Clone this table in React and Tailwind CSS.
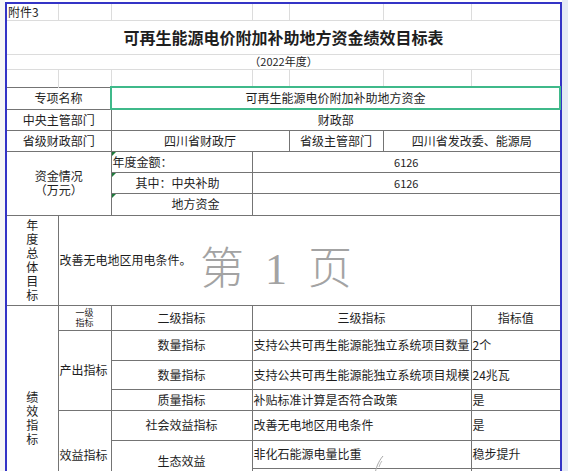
import React from "react"

const grid = "border-[#dcdcdc]"
const line = "border border-[#747474] p-0 whitespace-nowrap overflow-hidden"

const Tri = () => (
  <span className="absolute left-0 top-0 h-0 w-0 border-r-[4px] border-t-[4px] border-r-transparent border-t-[#1f7a3c]" />
)

const Vertical = ({ text }) => (
  <div className="flex flex-col items-center leading-[14px]">
    {text.split("").map((c, i) => (
      <span key={i}>{c}</span>
    ))}
  </div>
)

const App = () => {
  return (
    <div className="flex h-[471px] w-[568px] overflow-hidden bg-white font-['Noto_Sans_CJK_SC',sans-serif] text-[#1e1e1e]">
      <div className="w-[5px] shrink-0 bg-[#f6f6f6]" />

      <div className="relative mt-[2px] w-[557px] shrink-0 border-l-2 border-r-2 border-t-2 border-[#3434c6] bg-white">
        <table className="w-[553px] table-fixed border-collapse text-[12px] leading-[14px]">
          <colgroup>
            <col className="w-[51px]" />
            <col className="w-[53px]" />
            <col className="w-[141px]" />
            <col className="w-[37px]" />
            <col className="w-[94px]" />
            <col className="w-[88px]" />
            <col className="w-[89px]" />
          </colgroup>
          <tbody>
            <tr className="h-[16px]">
              <td className={`border-b border-r ${grid} p-0 pl-[1px] whitespace-nowrap`}>附件3</td>
              <td className={`border-b border-r ${grid} p-0`} />
              <td className={`border-b border-r ${grid} p-0`} />
              <td className={`border-b border-r ${grid} p-0`} />
              <td className={`border-b border-r ${grid} p-0`} />
              <td className={`border-b border-r ${grid} p-0`} />
              <td className={`border-b ${grid} p-0`} />
            </tr>
            <tr className="h-[34px]">
              <td colSpan={7} className={`border-b ${grid} p-0 text-center text-[16px] font-bold leading-[20px]`}>
                可再生能源电价附加补助地方资金绩效目标表
              </td>
            </tr>
            <tr className="h-[15px]">
              <td colSpan={7} className={`border-b ${grid} p-0 text-center text-[11px] leading-[13px]`}>
                （2022年度）
              </td>
            </tr>
            <tr className="h-[18px]">
              <td className={`border-r ${grid} p-0`} />
              <td className={`border-r ${grid} p-0`} />
              <td className={`border-r ${grid} p-0`} />
              <td className={`border-r ${grid} p-0`} />
              <td className={`border-r ${grid} p-0`} />
              <td className={`border-r ${grid} p-0`} />
              <td className="p-0" />
            </tr>

            <tr className="h-[22px]">
              <td colSpan={2} className={`${line} border-l-0 text-center`}>专项名称</td>
              <td colSpan={5} className="border-2 border-[#3fb98a] p-0 text-center">
                可再生能源电价附加补助地方资金
              </td>
            </tr>
            <tr className="h-[21px]">
              <td colSpan={2} className={`${line} border-l-0 text-center`}>中央主管部门</td>
              <td colSpan={5} className={`${line} border-r-0 text-center`}>财政部</td>
            </tr>
            <tr className="h-[21px]">
              <td colSpan={2} className={`${line} border-l-0 text-center`}>省级财政部门</td>
              <td colSpan={2} className={`${line} text-center`}>四川省财政厅</td>
              <td className={`${line} text-center`}>省级主管部门</td>
              <td colSpan={2} className={`${line} border-r-0 text-center`}>四川省发改委、能源局</td>
            </tr>
            <tr className="h-[21px]">
              <td colSpan={2} rowSpan={3} className={`${line} border-l-0 text-center`}>
                资金情况
                <br />
                （万元）
              </td>
              <td className={`${line} relative pl-[1px] text-left`}>
                <Tri />
                年度金额：
              </td>
              <td colSpan={4} className={`${line} border-r-0 text-center text-[11px]`}>6126</td>
            </tr>
            <tr className="h-[21px]">
              <td className={`${line} relative pr-[8px] text-center`}>
                <Tri />
                其中：中央补助
              </td>
              <td colSpan={4} className={`${line} border-r-0 text-center text-[11px]`}>6126</td>
            </tr>
            <tr className="h-[22px]">
              <td className={`${line} relative pl-[28px] text-center`}>
                <Tri />
                地方资金
              </td>
              <td colSpan={4} className={`${line} border-r-0`} />
            </tr>

            <tr className="h-[90px]">
              <td className={`${line} border-l-0`}>
                <Vertical text="年度总体目标" />
              </td>
              <td colSpan={6} className={`${line} border-r-0 pl-[1px] text-left`}>
                改善无电地区用电条件。
              </td>
            </tr>

            <tr className="h-[25px]">
              <td rowSpan={7} className={`${line} border-l-0 pt-[84px] align-top`}>
                <Vertical text="绩效指标" />
              </td>
              <td className={`${line} text-center text-[9px] leading-[10px]`}>
                一级
                <br />
                指标
              </td>
              <td className={`${line} text-center`}>二级指标</td>
              <td colSpan={3} className={`${line} text-center`}>三级指标</td>
              <td className={`${line} border-r-0 text-center`}>指标值</td>
            </tr>
            <tr className="h-[30px]">
              <td rowSpan={3} className={`${line} pl-[1px] text-left`}>产出指标</td>
              <td className={`${line} text-center`}>数量指标</td>
              <td colSpan={3} className={`${line} pl-[1px] text-left`}>支持公共可再生能源能独立系统项目数量</td>
              <td className={`${line} border-r-0 pl-[1px] text-left`}>2个</td>
            </tr>
            <tr className="h-[29px]">
              <td className={`${line} text-center`}>数量指标</td>
              <td colSpan={3} className={`${line} pl-[1px] text-left`}>支持公共可再生能源能独立系统项目规模</td>
              <td className={`${line} border-r-0 pl-[1px] text-left`}>24兆瓦</td>
            </tr>
            <tr className="h-[21px]">
              <td className={`${line} text-center`}>质量指标</td>
              <td colSpan={3} className={`${line} pl-[1px] text-left`}>补贴标准计算是否符合政策</td>
              <td className={`${line} border-r-0 pl-[1px] text-left`}>是</td>
            </tr>
            <tr className="h-[30px]">
              <td rowSpan={3} className={`${line} pl-[1px] text-left`}>效益指标</td>
              <td className={`${line} text-center`}>社会效益指标</td>
              <td colSpan={3} className={`${line} pl-[1px] text-left`}>改善无电地区用电条件</td>
              <td className={`${line} border-r-0 pl-[1px] text-left`}>是</td>
            </tr>
            <tr className="h-[28px]">
              <td rowSpan={2} className={`${line} text-center leading-[18px]`}>
                生态效益
                <br />
                指标
              </td>
              <td colSpan={3} className={`${line} pl-[1px] text-left`}>非化石能源电量比重</td>
              <td className={`${line} border-r-0 pl-[1px] text-left`}>稳步提升</td>
            </tr>
            <tr className="h-[32px]">
              <td colSpan={3} className={line} />
              <td className={`${line} border-r-0`} />
            </tr>
          </tbody>
        </table>

        <div className="pointer-events-none absolute left-[193px] top-[239px] flex items-baseline gap-[21px] text-[44px] font-light leading-none text-[#a3a3a3]">
          <span>第</span>
          <span className="font-['Liberation_Serif',serif] font-normal">1</span>
          <span>页</span>
        </div>

        <svg className="pointer-events-none absolute left-[362px] top-[446px]" width="20" height="24" viewBox="0 0 20 24">
          <path d="M6 24 C7 18 9 12 14 6" fill="none" stroke="#a8a8a8" strokeWidth="1" />
          <path d="M10 17 C11 14 12 12 13 11" fill="none" stroke="#b8b8b8" strokeWidth="1" />
        </svg>
      </div>

      <div className="flex-1 bg-[#e4eaf5]" />
    </div>
  )
}

export default App
